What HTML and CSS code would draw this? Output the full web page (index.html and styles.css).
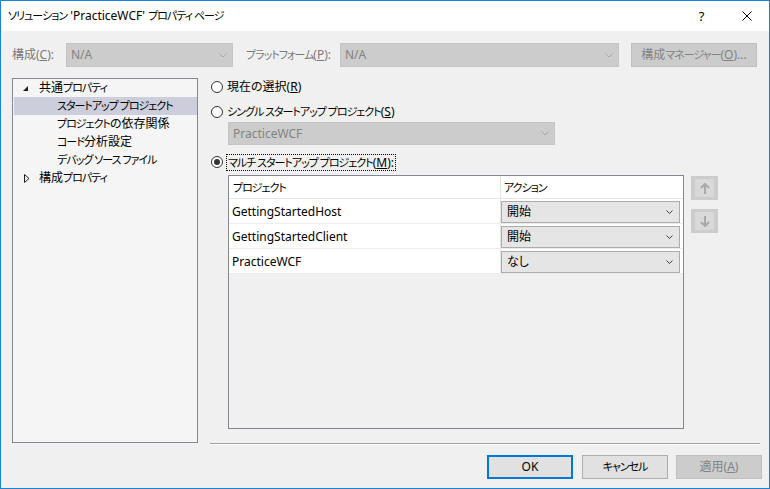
FILE: index.html
```html
<!DOCTYPE html>
<html lang="ja">
<head>
<meta charset="utf-8">
<title>ソリューション 'PracticeWCF' プロパティ ページ</title>
<link rel="stylesheet" href="styles.css">
</head>
<body>
<div class="window">
  <div class="titlebar">
    <span class="title"><span class="k">ソリューション</span> 'PracticeWCF' <span class="k">プロパティ ページ</span></span>
    <span class="tb-btn help">?</span>
    <span class="tb-btn close"><svg width="10" height="10" viewBox="0 0 10 10"><path d="M0.5 0.5 L9.5 9.5 M9.5 0.5 L0.5 9.5" stroke="#000" stroke-width="1" fill="none"/></svg></span>
  </div>

  <div class="config">
    <span class="lbl lbl-cfg">構成(<u>C</u>):</span>
    <div class="combo off cfg-combo"><span>N/A</span><svg class="chev" width="8" height="5" viewBox="0 0 8 5"><path d="M0.5 0.5 L4 4 L7.5 0.5" stroke="#a8a8a8" fill="none"/></svg></div>
    <span class="lbl lbl-plat"><span class="k">プラットフォーム</span>(<u>P</u>):</span>
    <div class="combo off plat-combo"><span>N/A</span><svg class="chev" width="8" height="5" viewBox="0 0 8 5"><path d="M0.5 0.5 L4 4 L7.5 0.5" stroke="#a8a8a8" fill="none"/></svg></div>
    <span class="btn off cfg-btn">構成<span class="k">マネージャー</span>(<u>O</u>)...</span>
  </div>

  <div class="main">
    <div class="tree">
      <div class="node lvl0"><span class="tw"><svg width="5" height="5" viewBox="0 0 5 5"><polygon points="5,0 5,5 0,5" fill="#1e1e1e"/></svg></span>共通<span class="k">プロパティ</span></div>
      <div class="node lvl1 sel"><span class="k">スタートアップ プロジェクト</span></div>
      <div class="node lvl1"><span class="k">プロジェクト</span>の依存関係</div>
      <div class="node lvl1"><span class="k">コード</span>分析設定</div>
      <div class="node lvl1"><span class="k">デバッグ ソース ファイル</span></div>
      <div class="node lvl0"><span class="tw"><svg width="6" height="9" viewBox="0 0 6 9"><polygon points="0.5,0.5 5,4.5 0.5,8.5" fill="none" stroke="#1e1e1e"/></svg></span>構成<span class="k">プロパティ</span></div>
    </div>

    <div class="pane">
      <div class="radio-row r1"><span class="radio"></span><span class="rtext">現在の選択(<u>R</u>)</span></div>
      <div class="radio-row r2"><span class="radio"></span><span class="rtext"><span class="k">シングル スタートアップ プロジェクト</span>(<u>S</u>)</span></div>
      <div class="combo off single-combo"><span>PracticeWCF</span><svg class="chev" width="8" height="5" viewBox="0 0 8 5"><path d="M0.5 0.5 L4 4 L7.5 0.5" stroke="#a8a8a8" fill="none"/></svg></div>
      <div class="radio-row r3"><span class="radio on"></span><span class="rtext focus"><span class="k">マルチ スタートアップ プロジェクト</span>(<u>M</u>):</span></div>

      <div class="grid-area">
        <div class="table">
          <div class="trow head">
            <div class="c1"><span class="k">プロジェクト</span></div>
            <div class="c2"><span class="k">アクション</span></div>
          </div>
          <div class="trow">
            <div class="c1">GettingStartedHost</div>
            <div class="c2"><div class="combo act"><span>開始</span><svg class="chev" width="7" height="4" viewBox="0 0 7 4"><path d="M0.5 0.5 L3.5 3.5 L6.5 0.5" stroke="#404040" fill="none"/></svg></div></div>
          </div>
          <div class="trow">
            <div class="c1">GettingStartedClient</div>
            <div class="c2"><div class="combo act"><span>開始</span><svg class="chev" width="7" height="4" viewBox="0 0 7 4"><path d="M0.5 0.5 L3.5 3.5 L6.5 0.5" stroke="#404040" fill="none"/></svg></div></div>
          </div>
          <div class="trow">
            <div class="c1">PracticeWCF</div>
            <div class="c2"><div class="combo act"><span>なし</span><svg class="chev" width="7" height="4" viewBox="0 0 7 4"><path d="M0.5 0.5 L3.5 3.5 L6.5 0.5" stroke="#404040" fill="none"/></svg></div></div>
          </div>
        </div>
        <div class="movers">
          <span class="mv"><svg width="10" height="11" viewBox="0 0 10 11"><path d="M5 1 L5 11 M1 5 L5 1 L9 5" stroke="#a9a9a9" stroke-width="2" fill="none"/></svg></span>
          <span class="mv down"><svg width="10" height="11" viewBox="0 0 10 11"><path d="M5 0 L5 10 M1 6 L5 10 L9 6" stroke="#a9a9a9" stroke-width="2" fill="none"/></svg></span>
        </div>
      </div>

      <div class="sep"></div>
    </div>
  </div>

  <div class="footer">
    <span class="btn ok">OK</span>
    <span class="btn cancel"><span class="k">キャンセル</span></span>
    <span class="btn off apply">適用(<u>A</u>)</span>
  </div>
</div>
</body>
</html>
```

FILE: styles.css
```css
* { box-sizing: border-box; }
html, body { margin: 0; padding: 0; }
body {
  font-family: "Noto Sans", "Noto Sans CJK JP", sans-serif;
  font-size: 12px;
  font-feature-settings: "palt";
  color: #000;
  background: #f0f0f0;
}
u { text-decoration: underline; text-underline-offset: 1px; }
.k { font-size: 11px; letter-spacing: -1px; }

.window {
  width: 770px;
  height: 489px;
  border: 1px solid #1883d7;
  background: #f0f0f0;
  display: flex;
  flex-direction: column;
  overflow: hidden;
}

/* title bar */
.titlebar {
  height: 30px;
  background: #fff;
  display: flex;
  align-items: center;
}
.title {
  flex: 1;
  padding-left: 7px;
  line-height: 16px;
  white-space: nowrap;
}
.tb-btn {
  width: 46px;
  height: 30px;
  display: flex;
  align-items: center;
  justify-content: center;
}
.help { font-size: 13px; padding-left: 3px; }
.close { padding-left: 1px; }

/* config row */
.config {
  margin-top: 12px;
  height: 24px;
  padding-left: 11px;
  display: flex;
  align-items: center;
}
.lbl { color: #7a7a7a; line-height: 24px; white-space: nowrap; flex: none; }
.lbl-cfg { width: 54px; }
.lbl-plat { width: 94px; margin-left: 13px; }

.combo {
  display: flex;
  align-items: center;
  justify-content: space-between;
  border: 1px solid #c4c4c4;
  background: #cccccc;
  color: #838383;
  padding: 0 5px 0 4px;
  flex: none;
}
.combo span { line-height: 16px; }
.cfg-combo { width: 167px; height: 24px; }
.plat-combo { width: 279px; height: 24px; }

.btn {
  display: flex;
  align-items: center;
  justify-content: center;
  border: 1px solid #adadad;
  background: #e1e1e1;
  height: 24px;
  line-height: 16px;
  white-space: nowrap;
  flex: none;
}
.btn.off { background: #cccccc; border-color: #bfbfbf; color: #838383; }
.cfg-btn { width: 126px; margin-left: 12px; }

/* main */
.main {
  margin-top: 11px;
  height: 367px;
  display: flex;
  align-items: flex-start;
  padding-left: 11px;
}
.tree {
  width: 186px;
  height: 365px;
  border: 1px solid #828790;
  background: #f5f5f5;
  flex: none;
}
.node {
  height: 18px;
  line-height: 18px;
  margin-left: 1px;
  display: flex;
  align-items: center;
  white-space: nowrap;
}
.node.lvl0 { padding-left: 8px; }
.node.lvl1 { padding-left: 43px; }
.node.sel { background: #cccedb; }
.tw {
  width: 17px;
  height: 18px;
  display: flex;
  align-items: center;
  flex: none;
}
.node:first-child .tw { padding-left: 1px; padding-top: 1px; }
.node:last-child .tw { padding-left: 2px; }

.pane {
  margin-left: 12px;
  width: 550px;
  display: flex;
  flex-direction: column;
}
.radio-row {
  height: 18px;
  display: flex;
  align-items: center;
  padding-left: 1px;
}
.r2 { margin-top: 7px; }
.r3 { margin-top: 8px; }
.radio {
  width: 12px;
  height: 12px;
  border: 1px solid #333;
  border-radius: 50%;
  background: #fff;
  margin-right: 4px;
  position: relative;
  flex: none;
}
.radio.on::after {
  content: "";
  position: absolute;
  left: 2px; top: 2px;
  width: 6px; height: 6px;
  border-radius: 50%;
  background: #333;
}
.rtext { line-height: 18px; white-space: nowrap; }
.r3 .radio { margin-right: 3px; }
.rtext.focus {
  border: 1px dotted #000;
  line-height: 15px;
  padding: 0 1px;
}

.single-combo {
  margin-top: 1px;
  margin-left: 18px;
  width: 327px;
  height: 23px;
}

.grid-area {
  margin-top: 4px;
  margin-left: 18px;
  display: flex;
  align-items: flex-start;
}
.table {
  width: 456px;
  height: 254px;
  border: 1px solid #828790;
  background: #f0f0f0;
  flex: none;
}
.trow {
  display: flex;
  height: 25px;
  background: #fff;
  border-bottom: 1px solid #ececec;
}
.trow.head { height: 23px; border-bottom: 1px solid #e5e5e5; }
.c1 {
  width: 272px;
  border-right: 1px solid #e5e5e5;
  padding-left: 3px;
  display: flex;
  align-items: center;
  white-space: nowrap;
}
.head .c1 { padding-left: 4px; }
.c2 {
  width: 181px;
  display: flex;
  align-items: flex-start;
}
.head .c2 { padding-left: 3px; align-items: center; }
.combo.act {
  margin-top: 2px;
  width: 179px;
  height: 22px;
  background: #e5e5e5;
  border: 1px solid #acacac;
  color: #000;
  padding: 0 6px 0 5px;
}

.movers {
  margin-left: 7px;
  margin-top: 1px;
  display: flex;
  flex-direction: column;
  gap: 9px;
}
.mv {
  width: 27px;
  height: 24px;
  background: #cccccc;
  display: flex;
  align-items: center;
  justify-content: center;
  position: relative;
}
.mv::before {
  content: "";
  position: absolute;
  left: 4px; top: 3px; right: 4px; bottom: 3px;
  background: #d9d9d9;
}
.mv svg { position: relative; }

.sep {
  margin-top: 14px;
  height: 2px;
  border-top: 1px solid #a0a0a0;
  border-bottom: 1px solid #fff;
}

/* footer */
.footer {
  margin-top: 10px;
  display: flex;
  justify-content: flex-end;
  padding-right: 7px;
}
.footer .btn { width: 86px; }
.ok { border: 2px solid #0078d7; }
.cancel { margin-left: 9px; }
.apply { margin-left: 8px; }
```
